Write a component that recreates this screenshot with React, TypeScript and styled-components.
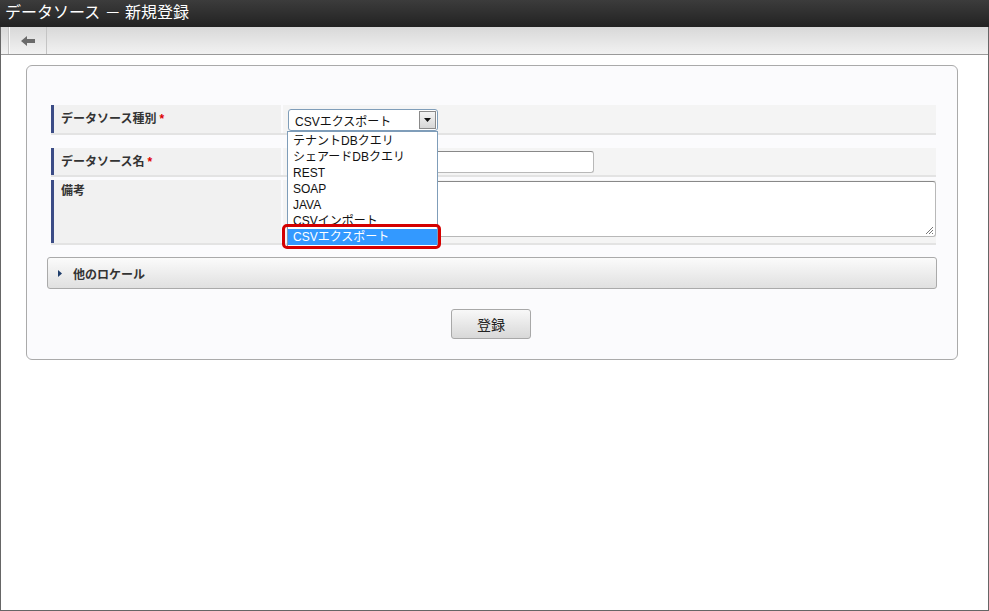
import React from 'react';
import styled, { createGlobalStyle } from 'styled-components';

const GlobalStyle = createGlobalStyle`
  html, body {
    margin: 0;
    padding: 0;
    background: #fff;
  }
  body {
    font-family: "Liberation Sans", "Noto Sans CJK JP", sans-serif;
    color: #333;
  }
`;

const Frame = styled.div`
  width: 989px;
  height: 611px;
  box-sizing: border-box;
  border: 1px solid #666;
  border-top: none;
  display: flex;
  flex-direction: column;
  background: #fff;
`;

const TitleBar = styled.div`
  height: 27px;
  margin: 0 -1px;
  background: linear-gradient(#3c3c3c, #222);
  color: #fff;
  font-size: 16px;
  line-height: 26px;
  padding-left: 5px;
  white-space: pre;
`;

const Toolbar = styled.div`
  height: 27px;
  display: flex;
  background: linear-gradient(#d8d8d8, #f2f2f2);
  border-bottom: 1px solid #9a9a9a;
  padding-left: 7px;
`;

const ToolButton = styled.div`
  width: 37px;
  display: flex;
  align-items: center;
  justify-content: center;
  border-left: 1px solid #c4c4c4;
  border-right: 1px solid #c4c4c4;
  box-shadow: inset 1px 0 0 #fafafa;
`;

const Panel = styled.div`
  margin: 10px 30px 0 25px;
  height: 295px;
  box-sizing: border-box;
  border: 1px solid #aaa;
  border-radius: 6px;
  background: #fbfbfd;
  padding: 39px 20px 0 20px;
`;

const Table = styled.div`
  margin: 0 1px 0 4px;
  display: flex;
  flex-direction: column;
`;

const Row = styled.div<{ $after: number }>`
  display: grid;
  grid-template-columns: 230px 1fr;
  column-gap: 2px;
  border-bottom: 2px solid #e3e3e3;
  margin-bottom: ${p => p.$after}px;
`;

const Label = styled.div<{ $top?: boolean }>`
  background: #f1f1f1;
  border-left: 3px solid #3b4c86;
  padding: ${p => (p.$top ? '3px' : '0')} 8px 0 7px;
  display: flex;
  align-items: ${p => (p.$top ? 'flex-start' : 'center')};
  font-size: 12px;
  font-weight: bold;
  line-height: 16px;
  color: #333;
`;

const Required = styled.span`
  color: #d00;
  margin-left: 3px;
`;

const Value = styled.div<{ $pad: string }>`
  background: #f4f4f4;
  padding: ${p => p.$pad};
  position: relative;
`;

const SelectBox = styled.div`
  position: relative;
  width: 150px;
  height: 22px;
  box-sizing: border-box;
  border: 1px solid #7f9db9;
  border-radius: 3px;
  background: #fff;
  display: flex;
  align-items: center;
  padding-left: 6px;
  font-size: 12px;
  color: #111;
`;

const SelectArrow = styled.div`
  position: absolute;
  right: 1px;
  top: 1px;
  width: 17px;
  height: 18px;
  box-sizing: border-box;
  border: 1px solid #8a8a8a;
  background: linear-gradient(#f4f4f4, #d6d6d6);
  display: flex;
  align-items: center;
  justify-content: center;
`;

const DropList = styled.div`
  position: absolute;
  left: -2px;
  top: 21px;
  width: 151px;
  box-sizing: border-box;
  border: 1px solid #7f9db9;
  background: #fff;
  padding: 1px 0 2px;
  z-index: 5;
`;

const Option = styled.div<{ $selected?: boolean }>`
  height: 16px;
  line-height: 16px;
  font-size: 12px;
  padding-left: 5px;
  color: ${p => (p.$selected ? '#fff' : '#111')};
  background: ${p => (p.$selected ? '#3399ff' : 'transparent')};
  white-space: nowrap;
`;

const Highlight = styled.div`
  position: absolute;
  left: -6px;
  top: 92px;
  width: 159px;
  height: 25px;
  box-sizing: border-box;
  border: 3px solid #d40000;
  border-radius: 5px;
`;

const TextInput = styled.div`
  width: 306px;
  height: 22px;
  box-sizing: border-box;
  border: 1px solid #b8b8b8;
  border-top-color: #888;
  border-radius: 3px;
  background: #fff;
`;

const TextArea = styled.div`
  position: relative;
  height: 56px;
  box-sizing: border-box;
  border: 1px solid #b8b8b8;
  border-top-color: #888;
  border-radius: 3px;
  background: #fff;
`;

const Grip = styled.svg`
  position: absolute;
  right: 1px;
  bottom: 1px;
`;

const Accordion = styled.div`
  margin-top: 12px;
  height: 32px;
  box-sizing: border-box;
  border: 1px solid #aaa;
  border-radius: 3px;
  background: linear-gradient(#fbfbfb, #e0e0e0);
  display: flex;
  align-items: center;
  padding-left: 10px;
  gap: 11px;
  font-size: 12px;
  font-weight: bold;
  color: #333;
`;

const Actions = styled.div`
  display: flex;
  justify-content: center;
  margin-top: 20px;
  padding-right: 2px;
`;

const Button = styled.div`
  width: 80px;
  height: 30px;
  box-sizing: border-box;
  border: 1px solid #a8a8a8;
  border-radius: 3px;
  background: linear-gradient(#f8f8f8, #d8d8d8);
  display: flex;
  align-items: center;
  justify-content: center;
  font-size: 14px;
  color: #222;
`;

const options = ['テナントDBクエリ', 'シェアードDBクエリ', 'REST', 'SOAP', 'JAVA', 'CSVインポート', 'CSVエクスポート'];

export default function App() {
  return (
    <>
      <GlobalStyle />
      <Frame>
        <TitleBar>データソース － 新規登録</TitleBar>
        <Toolbar>
          <ToolButton>
            <svg width="14" height="10" viewBox="0 0 14 10">
              <path d="M0 5 L6 0 L6 3 L14 3 L14 7 L6 7 L6 10 Z" fill="#6a6a6a" />
            </svg>
          </ToolButton>
        </Toolbar>
        <Panel>
          <Table>
            <Row $after={13}>
              <Label>データソース種別<Required>*</Required></Label>
              <Value $pad="4px 0 2px 5px">
                <SelectBox>
                  CSVエクスポート
                  <SelectArrow>
                    <svg width="7" height="4" viewBox="0 0 7 4">
                      <path d="M0 0 H7 L3.5 4 Z" fill="#111" />
                    </svg>
                  </SelectArrow>
                  <DropList>
                    {options.map((o, i) => (
                      <Option key={o} $selected={i === options.length - 1}>{o}</Option>
                    ))}
                    <Highlight />
                  </DropList>
                </SelectBox>
              </Value>
            </Row>
            <Row $after={3}>
              <Label>データソース名<Required>*</Required></Label>
              <Value $pad="3px 0 2px 5px">
                <TextInput />
              </Value>
            </Row>
            <Row $after={0}>
              <Label $top>備考</Label>
              <Value $pad="1px 0 6px 5px">
                <TextArea>
                  <Grip width="9" height="9" viewBox="0 0 9 9">
                    <path d="M8 1 L1 8 M8 4 L4 8 M8 7 L7 8" stroke="#777" strokeWidth="1" />
                  </Grip>
                </TextArea>
              </Value>
            </Row>
          </Table>
          <Accordion>
            <svg width="4" height="7" viewBox="0 0 4 7">
              <path d="M0 0 L4 3.5 L0 7 Z" fill="#1f3d6b" />
            </svg>
            他のロケール
          </Accordion>
          <Actions>
            <Button>登録</Button>
          </Actions>
        </Panel>
      </Frame>
    </>
  );
}
